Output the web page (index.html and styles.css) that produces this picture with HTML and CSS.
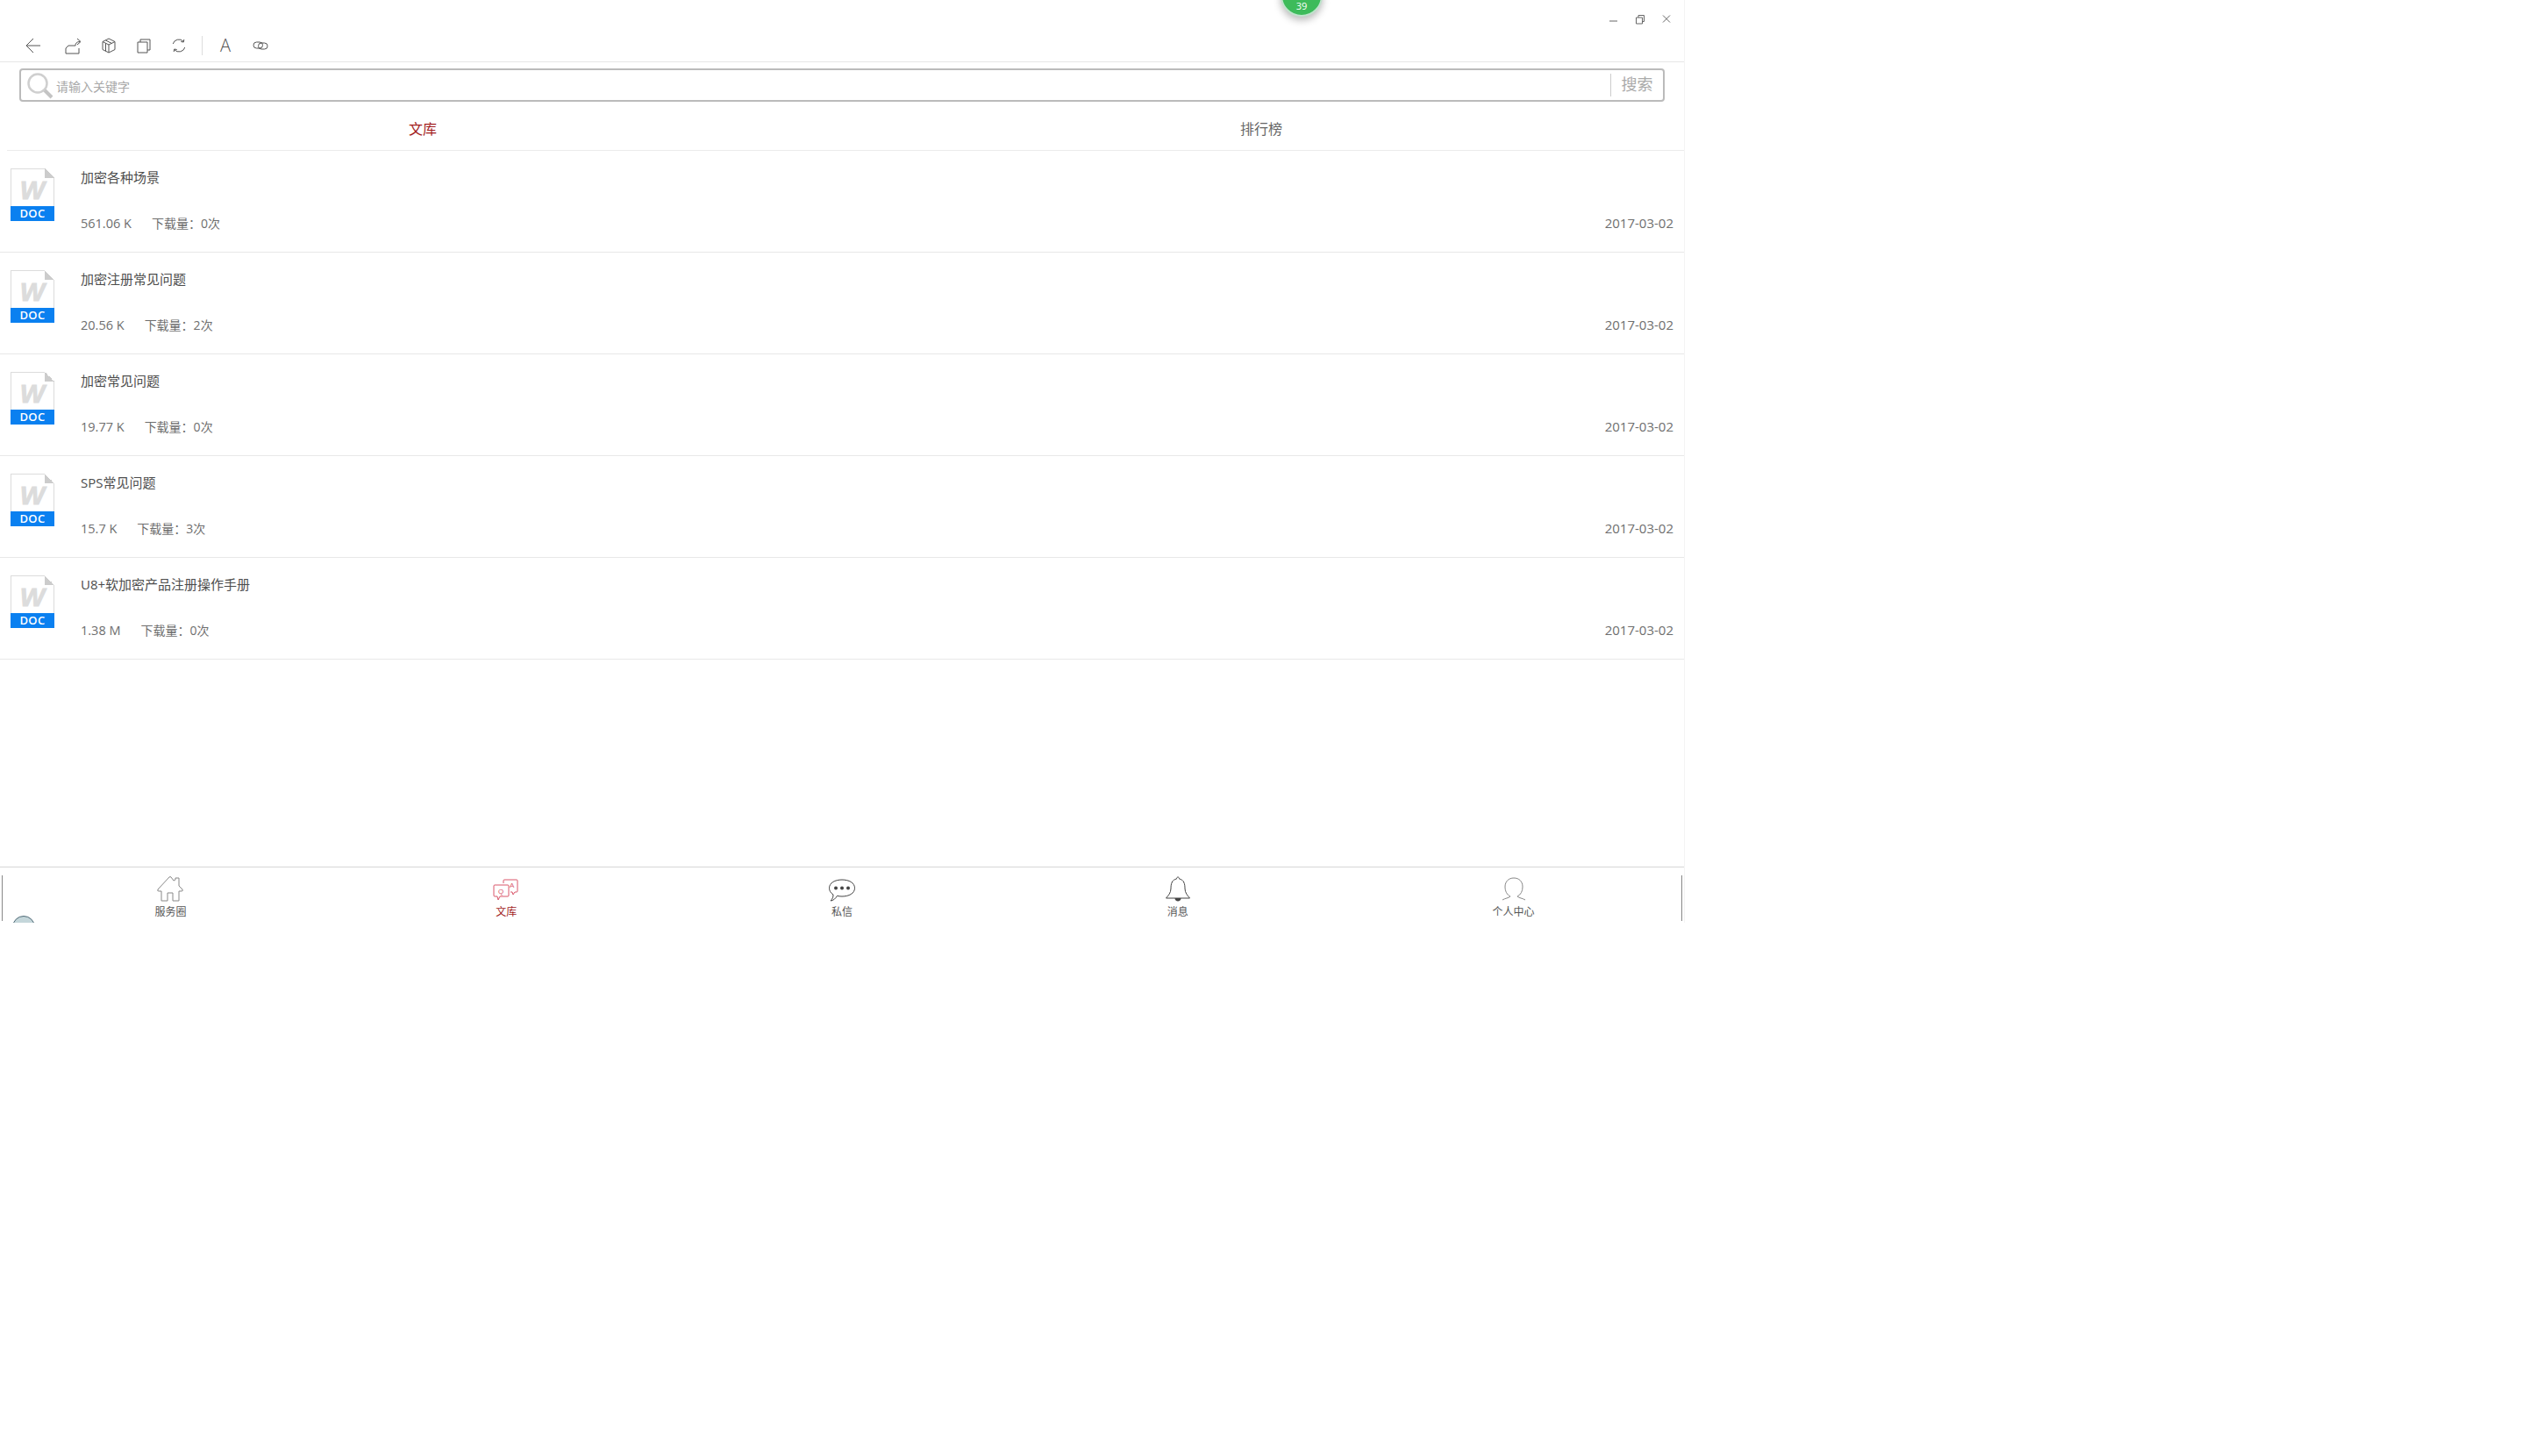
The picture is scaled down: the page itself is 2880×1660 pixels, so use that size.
FILE: index.html
```html
<!DOCTYPE html>
<html lang="zh-CN">
  <head>
    <meta charset="UTF-8" />
    <title>文库</title>
    <link rel="stylesheet" href="styles.css">
  </head>
  <body>
    <div class="app">
      <!-- floating badge -->
      <div class="badge">39</div>
      <div class="avatar-peek"></div>

      <header class="header">
        <div class="window-btns">
          <svg class="win-icon" viewBox="0 0 14 14"><path d="M2 9h9" /></svg>
          <svg class="win-icon" viewBox="0 0 14 14"><path d="M2.500 5h7v7h-7z M5 5V2.500h6.500v7H9.500" /></svg>
          <svg class="win-icon" viewBox="0 0 14 14"><path d="M3 2.500l8 8M11 2.500l-8 8" /></svg>
        </div>
        <div class="toolbar">
          <svg class="tool tool-back" viewBox="0 0 28 28"><path d="M22 14H7M14 6l-8 8 8 8" /></svg>
          <svg class="tool tool-share" viewBox="0 0 28 28"><path d="M9 14l-3 3v6h15v-6M9 14h8M17 14c0-2.500 1.500-4.500 5-4.500M19 6l4 3.500-4 3.500" /></svg>
          <svg class="tool" viewBox="0 0 28 28"><path d="M14 6l7 3.500v9L14 22l-7-3.500v-9zM7 9.500l7 3.500 7-3.500M14 13v9M10.500 8l7 3.500M10.500 11.200v9" /></svg>
          <svg class="tool" viewBox="0 0 28 28"><path d="M7 10h11v12H7zM10 10V7h11v12h-3" /></svg>
          <svg class="tool" viewBox="0 0 28 28"><path d="M7.200 12A7 7 0 0 1 19 9.200M20.800 16A7 7 0 0 1 9 18.800M19.800 7l-.500 3-3-.500M8.200 21l.500-3 3 .500" /></svg>
          <span class="tool-sep"></span>
          <span class="tool tool-text">A</span>
          <svg class="tool" viewBox="0 0 28 28"><rect x="6" y="10" width="10.500" height="7" rx="3.500" /><rect x="11.500" y="11" width="10.500" height="7" rx="3.500" /></svg>
        </div>
      </header>

      <div class="search">
        <svg class="search-icon" viewBox="0 0 32 32"><circle cx="13" cy="13" r="10.500" /><path class="search-handle" d="M21 21l8 8" /></svg>
        <span class="search-input">请输入关键字</span>
        <span class="search-btn">搜索</span>
      </div>

      <nav class="tabs">
        <span class="tab tab-active">文库</span>
        <span class="tab">排行榜</span>
      </nav>

      <main class="list">
        <div class="row">
          <div class="doc-icon">
            <div class="doc-page"><span class="doc-w">W</span><i class="doc-fold"></i></div>
            <div class="doc-band">DOC</div>
          </div>
          <div class="row-body">
            <div class="row-title">加密各种场景</div>
            <div class="row-meta">
              <span class="size">561.06 K</span><span>下载量：0次</span>
              <span class="date">2017-03-02</span>
            </div>
          </div>
        </div>

        <div class="row">
          <div class="doc-icon">
            <div class="doc-page"><span class="doc-w">W</span><i class="doc-fold"></i></div>
            <div class="doc-band">DOC</div>
          </div>
          <div class="row-body">
            <div class="row-title">加密注册常见问题</div>
            <div class="row-meta">
              <span class="size">20.56 K</span><span>下载量：2次</span>
              <span class="date">2017-03-02</span>
            </div>
          </div>
        </div>

        <div class="row">
          <div class="doc-icon">
            <div class="doc-page"><span class="doc-w">W</span><i class="doc-fold"></i></div>
            <div class="doc-band">DOC</div>
          </div>
          <div class="row-body">
            <div class="row-title">加密常见问题</div>
            <div class="row-meta">
              <span class="size">19.77 K</span><span>下载量：0次</span>
              <span class="date">2017-03-02</span>
            </div>
          </div>
        </div>

        <div class="row">
          <div class="doc-icon">
            <div class="doc-page"><span class="doc-w">W</span><i class="doc-fold"></i></div>
            <div class="doc-band">DOC</div>
          </div>
          <div class="row-body">
            <div class="row-title">SPS常见问题</div>
            <div class="row-meta">
              <span class="size">15.7 K</span><span>下载量：3次</span>
              <span class="date">2017-03-02</span>
            </div>
          </div>
        </div>

        <div class="row">
          <div class="doc-icon">
            <div class="doc-page"><span class="doc-w">W</span><i class="doc-fold"></i></div>
            <div class="doc-band">DOC</div>
          </div>
          <div class="row-body">
            <div class="row-title">U8+软加密产品注册操作手册</div>
            <div class="row-meta">
              <span class="size">1.38 M</span><span>下载量：0次</span>
              <span class="date">2017-03-02</span>
            </div>
          </div>
        </div>
      </main>

      <footer class="bottom-nav">
        <div class="nav-inner">
          <div class="nav-item">
            <svg class="nav-icon grey" viewBox="0 0 32 30"><path d="M15 1L2 15q-1 2 1 2h3v11h7v-9h6v9h7V17h3q2 0 1-2l-4-4V2h-4v2l-2 1-3-4q-1-1-2 0z" /></svg>
            <span>服务圈</span>
          </div>
          <div class="nav-item nav-active">
            <svg class="nav-icon red" viewBox="0 0 32 30">
              <path d="M13 8V5q0-1 1-1h14q1 0 1 1v12q0 1-1 1h-2l-2 3-1-3h-2" />
              <path d="M3 10h15q1 0 1 1v11q0 1-1 1H9l-2 4-1-4H3q-1 0-1-1V11q0-1 1-1z" />
              <text x="7" y="20" class="qa-letter">Q</text>
              <text x="20" y="13" class="qa-letter">A</text>
            </svg>
            <span>文库</span>
          </div>
          <div class="nav-item">
            <svg class="nav-icon dark" viewBox="0 0 32 30">
              <path d="M16 4c8 0 14.500 3.500 14.500 9.500S24 23 16 23c-2 0-4-.2-5.500-.7C9 25 6 28 3 28c2-2 3-4 3-7C3 19 1.500 16.500 1.500 13.500 1.500 7.500 8 4 16 4z" />
              <circle class="dot" cx="9" cy="13.500" r="2" /><circle class="dot" cx="16" cy="13.500" r="2" /><circle class="dot" cx="23" cy="13.500" r="2" />
            </svg>
            <span>私信</span>
          </div>
          <div class="nav-item">
            <svg class="nav-icon dark" viewBox="0 0 32 30">
              <path d="M16 1c1 0 1.500 1 1.500 2C23 4 24 9 24 14c0 5 3 8 5.500 11h-27C5 22 8 19 8 14c0-5 1-10 6.500-11 0-1 .5-2 1.500-2z" />
              <path class="dot" d="M12.500 25h7c0 2-1.500 3.500-3.500 3.500s-3.500-1.500-3.500-3.500z" />
            </svg>
            <span>消息</span>
          </div>
          <div class="nav-item">
            <svg class="nav-icon grey" viewBox="0 0 32 30"><path d="M3 27c3-2 7-2 9-4-4-2-6-6-6-11C6 6 10 2 16 2s10 4 10 10c0 5-2 9-6 11 2 2 6 2 9 4" /></svg>
            <span>个人中心</span>
          </div>
        </div>
      </footer>
    </div>
  </body>
</html>
```

FILE: styles.css
```css
* {
  margin: 0;
  padding: 0;
  box-sizing: border-box;
}

html,
body {
  height: 100%;
  background: #fff;
  overflow: hidden;
  font-family: "Open Sans", "Noto Sans CJK SC", sans-serif;
}

.app {
  position: relative;
  display: flex;
  flex-direction: column;
  width: 1921px;
  height: 1052px;
  border-right: 1px solid #f4f4f4;
  overflow: hidden;
}

/* floating things */
.badge {
  position: absolute;
  left: 1460px;
  top: -29px;
  display: flex;
  align-items: flex-end;
  justify-content: center;
  width: 48px;
  height: 48px;
  padding-bottom: 3px;
  border: 2px solid #bfe3cc;
  border-radius: 50%;
  background: #3dbb5a;
  box-shadow: 0 4px 8px rgba(0, 0, 0, 0.28);
  color: #fff;
  font-size: 11px;
  line-height: 14px;
}

.avatar-peek {
  position: absolute;
  left: 14px;
  top: 1044px;
  width: 26px;
  height: 26px;
  border: 1px solid #4f6a76;
  border-radius: 50%;
  background: #c4d6da;
}

/* header */
.header {
  flex: none;
  height: 71px;
  border-bottom: 1px solid #e6e6e6;
}

.window-btns {
  display: flex;
  justify-content: flex-end;
  gap: 16px;
  height: 37px;
  padding: 15px 13px 0 0;
}

.win-icon {
  width: 14px;
  height: 14px;
  fill: none;
  stroke: #666;
  stroke-width: 1;
}

.toolbar {
  display: flex;
  align-items: center;
  gap: 12px;
  height: 30px;
  padding-left: 24px;
}

.tool {
  width: 28px;
  height: 28px;
  fill: none;
  stroke: #555;
  stroke-width: 1;
}

.tool-back {
  margin-right: 5px;
}

.tool-share {
  margin-right: 1px;
}

.tool-sep {
  width: 1px;
  height: 22px;
  background: #ddd;
}

.tool-text {
  font-family: "Open Sans", sans-serif;
  font-size: 20px;
  font-weight: 300;
  line-height: 28px;
  text-align: center;
  color: #555;
}

/* search box */
.search {
  flex: none;
  display: flex;
  align-items: center;
  height: 38px;
  margin: 7px 22px 0 22px;
  border: 2px solid #bbb;
  border-radius: 4px;
}

.search-icon {
  width: 32px;
  height: 32px;
  margin: 2px 0 0 6px;
  fill: none;
  stroke: #cfcfcf;
  stroke-width: 2.5;
}

.search-handle {
  stroke: #c4c4c4;
  stroke-width: 4;
}

.search-input {
  flex: 1;
  margin-left: 2px;
  padding-top: 1px;
  font-size: 14px;
  color: #a8a8a8;
}

.search-btn {
  width: 60px;
  height: 26px;
  border-left: 1px solid #ccc;
  font-size: 18px;
  line-height: 24px;
  text-align: center;
  color: #aaa;
}

/* tabs */
.tabs {
  flex: none;
  display: flex;
  height: 56px;
  margin-left: 8px;
  padding-top: 5px;
  border-bottom: 1px solid #ececec;
}

.tab {
  flex: 1;
  align-self: center;
  padding-right: 8px;
  font-size: 16px;
  text-align: center;
  color: #666;
}

.tab-active {
  color: #a21d1d;
}

/* list */
.list {
  flex: 1;
}

.row {
  display: flex;
  height: 116px;
  padding: 20px 12px 0;
  border-bottom: 1px solid #e8e8e8;
}

.doc-icon {
  flex: none;
  display: flex;
  flex-direction: column;
  width: 50px;
  height: 60px;
}

.doc-page {
  position: relative;
  flex: 1;
  display: flex;
  align-items: center;
  justify-content: center;
  padding-top: 6px;
  border: 1px solid #dcdcdc;
  border-bottom: none;
}

.doc-w {
  font-family: "Liberation Sans", sans-serif;
  font-size: 30px;
  font-weight: 700;
  font-style: italic;
  line-height: 1;
  color: #dcdcdc;
  -webkit-text-stroke: 1px #dcdcdc;
}

.doc-fold {
  position: absolute;
  top: -1px;
  right: -1px;
  width: 11px;
  height: 11px;
  background: linear-gradient(45deg, #ccc 50%, #fff 50%);
}

.doc-band {
  flex: none;
  height: 17px;
  background: #0a80f0;
  color: #fff;
  font-size: 13px;
  font-weight: 600;
  letter-spacing: 0.4px;
  line-height: 17px;
  text-align: center;
}

.row-body {
  flex: 1;
  margin-left: 30px;
}

.row-title {
  margin-top: -1px;
  font-size: 15px;
  line-height: 22px;
  color: #4c4c4c;
}

.row-meta {
  display: flex;
  align-items: baseline;
  margin-top: 30px;
  font-size: 14px;
  line-height: 22px;
  color: #6e6e6e;
}

.size {
  margin-right: 23px;
  font-size: 14.500px;
}

.date {
  margin-left: auto;
  font-size: 15px;
}

/* bottom nav */
.bottom-nav {
  flex: none;
  height: 64px;
  padding: 9px 2px 2px;
  border-top: 1px solid #d6d6d6;
}

.nav-inner {
  display: flex;
  height: 100%;
  border-left: 1px solid #888;
  border-right: 1px solid #888;
}

.nav-item {
  flex: 1;
  display: flex;
  flex-direction: column;
  align-items: center;
  padding-top: 1px;
  font-size: 12px;
  line-height: 16px;
  color: #555;
}

.nav-active {
  color: #a21d1d;
}

.nav-icon {
  width: 32px;
  height: 30px;
  margin-bottom: 3px;
  fill: none;
  stroke-width: 1;
}

.nav-icon.grey {
  stroke: #888;
}

.nav-icon.dark {
  stroke: #444;
}

.nav-icon.red {
  stroke: #d9566a;
}

.dot {
  fill: #444;
  stroke: none;
}

.qa-letter {
  fill: #d9566a;
  stroke: none;
  font-size: 8px;
  font-family: "Liberation Sans", sans-serif;
}
```
